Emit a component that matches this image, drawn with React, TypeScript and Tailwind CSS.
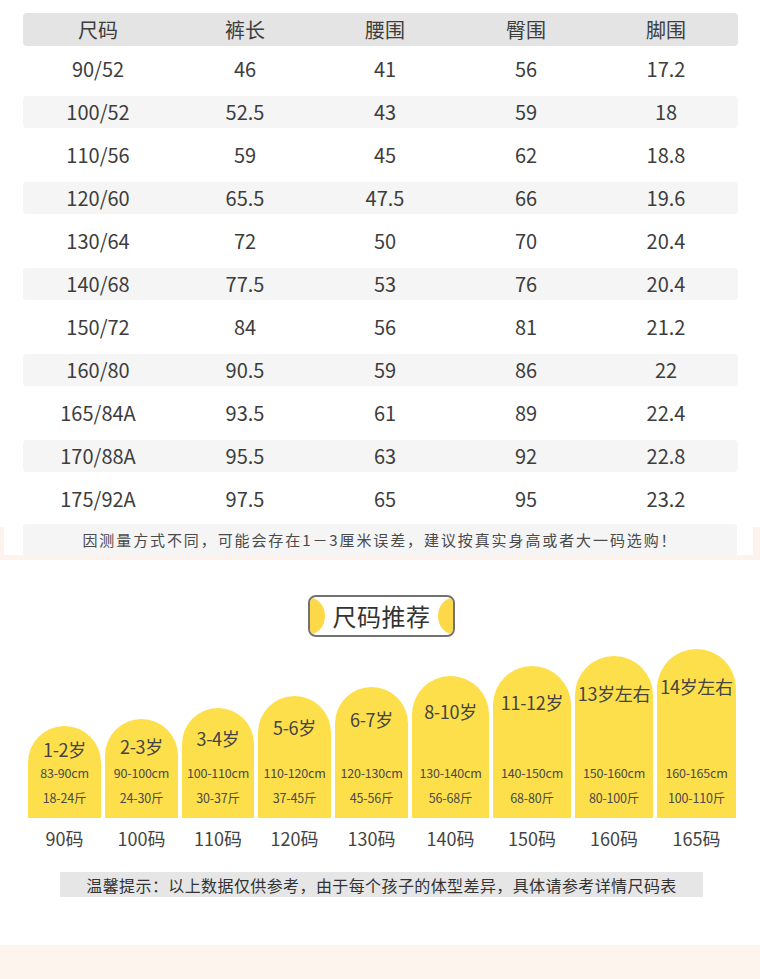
import React from 'react';

const font = { fontFamily: '"Noto Sans CJK SC", "Noto Sans", sans-serif' };

const headers = ['尺码', '裤长', '腰围', '臀围', '脚围'];

const rows = [
  ['90/52', '46', '41', '56', '17.2'],
  ['100/52', '52.5', '43', '59', '18'],
  ['110/56', '59', '45', '62', '18.8'],
  ['120/60', '65.5', '47.5', '66', '19.6'],
  ['130/64', '72', '50', '70', '20.4'],
  ['140/68', '77.5', '53', '76', '20.4'],
  ['150/72', '84', '56', '81', '21.2'],
  ['160/80', '90.5', '59', '86', '22'],
  ['165/84A', '93.5', '61', '89', '22.4'],
  ['170/88A', '95.5', '63', '92', '22.8'],
  ['175/92A', '97.5', '65', '95', '23.2'],
];

const arches = [
  { age: '1-2岁', cm: '83-90cm', jin: '18-24斤', code: '90码', w: 'w-[73px]', h: 'h-[92px]', pt: 'pt-[13px]' },
  { age: '2-3岁', cm: '90-100cm', jin: '24-30斤', code: '100码', w: 'w-[73px]', h: 'h-[99px]', pt: 'pt-[17px]' },
  { age: '3-4岁', cm: '100-110cm', jin: '30-37斤', code: '110码', w: 'w-[72px]', h: 'h-[110px]', pt: 'pt-[20px]' },
  { age: '5-6岁', cm: '110-120cm', jin: '37-45斤', code: '120码', w: 'w-[73px]', h: 'h-[122px]', pt: 'pt-[21px]' },
  { age: '6-7岁', cm: '120-130cm', jin: '45-56斤', code: '130码', w: 'w-[73px]', h: 'h-[131px]', pt: 'pt-[22px]' },
  { age: '8-10岁', cm: '130-140cm', jin: '56-68斤', code: '140码', w: 'w-[77px]', h: 'h-[142px]', pt: 'pt-[25px]' },
  { age: '11-12岁', cm: '140-150cm', jin: '68-80斤', code: '150码', w: 'w-[78px]', h: 'h-[152px]', pt: 'pt-[26px]' },
  { age: '13岁左右', cm: '150-160cm', jin: '80-100斤', code: '160码', w: 'w-[78px]', h: 'h-[162px]', pt: 'pt-[27px]' },
  { age: '14岁左右', cm: '160-165cm', jin: '100-110斤', code: '165码', w: 'w-[79px]', h: 'h-[169px]', pt: 'pt-[27px]' },
];

const cols = 'grid grid-cols-[150px_144px_136px_146px_134px] pr-[5px] items-center text-center';

function SizeTable() {
  return (
    <div className="mx-[23px] w-[715px]">
      <div className={`${cols} h-[33px] rounded-[4px] bg-[#e4e4e4] text-[20px] text-[#3d3d3d]`}>
        {headers.map(h => <div key={h}>{h}</div>)}
      </div>
      <div className="mt-[1px]">
        {rows.map((r, i) => (
          <div key={r[0]} className="h-[43px] py-[5.5px]">
            <div className={`${cols} h-[32px] rounded-[4px] text-[20px] text-[#3d3d3d] ${i % 2 === 1 ? 'bg-[#f5f5f5]' : ''}`}>
              {r.map((c, j) => <div key={j}>{c}</div>)}
            </div>
          </div>
        ))}
      </div>
    </div>
  );
}

export default function App() {
  return (
    <div className="w-[760px] min-h-[979px] bg-white pt-[13px]" style={font}>
      <SizeTable />

      {/* note strip */}
      <div className="h-[40px] bg-[linear-gradient(to_bottom,#ffffff_7px,#fdf3ec_7px)]">
        <div className="ml-[4px] mr-[7px] h-[35px] bg-white pt-[4px]">
          <div className="ml-[19px] mr-[16px] flex h-[32px] items-center justify-center rounded-[4px] bg-[#f5f5f5] text-[15px] tracking-[1.9px] text-[#4a4a4a]">
            因测量方式不同，可能会存在1－3厘米误差，建议按真实身高或者大一码选购！
          </div>
        </div>
      </div>

      {/* badge */}
      <div className="ml-[308px] mt-[35px] relative flex h-[42px] w-[147px] items-center justify-center overflow-hidden rounded-[8px] border-2 border-[#727272] bg-white">
        <div className="absolute left-[-15px] top-[1px] h-[36px] w-[30px] rounded-[50%] bg-[#fdd94a]" />
        <div className="absolute right-[-15px] top-[1px] h-[36px] w-[30px] rounded-[50%] bg-[#fdd94a]" />
        <span className="relative text-[24px] leading-none text-[#333] tracking-[0.5px]">尺码推荐</span>
      </div>

      {/* arches */}
      <div className="mt-[12px] flex h-[169px] items-end gap-[4px] pl-[28px]">
        {arches.map(a => (
          <div key={a.code} className={`${a.w} ${a.h} ${a.pt} flex flex-col items-center rounded-t-full bg-[#fddf4b] text-[#444]`}>
            <div className="whitespace-nowrap text-[18px] leading-[20px] tracking-[-0.3px]">{a.age}</div>
            <div className="mt-auto pb-[8px] text-center text-[12.5px] tracking-[-0.2px] text-[#4a4a4a]">
              <div className="whitespace-nowrap leading-[25px]">{a.cm}</div>
              <div className="whitespace-nowrap leading-[25px]">{a.jin}</div>
            </div>
          </div>
        ))}
      </div>
      <div className="mt-[8px] flex gap-[4px] pl-[28px]">
        {arches.map(a => (
          <div key={a.code} className={`${a.w} text-center text-[18px] leading-[24px] text-[#444]`}>
            {a.code}
          </div>
        ))}
      </div>

      {/* tip bar */}
      <div className="ml-[60px] mt-[22px] flex h-[25px] w-[643px] items-center justify-center bg-[#e6e6e6] text-[16px] tracking-[0.4px] text-[#333]">
        温馨提示：以上数据仅供参考，由于每个孩子的体型差异，具体请参考详情尺码表
      </div>

      <div className="mt-[48px] h-[34px] bg-[#fdf4ee]" />
    </div>
  );
}
